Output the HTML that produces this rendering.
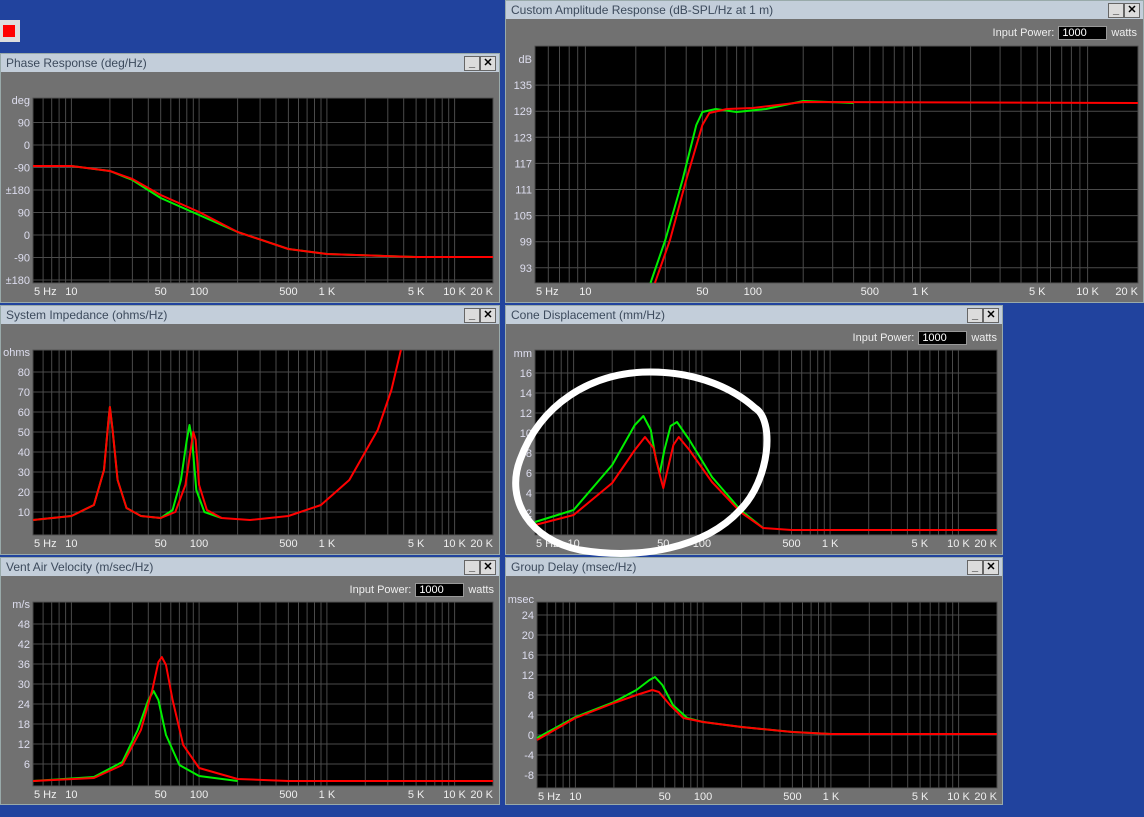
<!DOCTYPE html>
<html><head><meta charset="utf-8"><style>
body{margin:0;width:1144px;height:817px;overflow:hidden;background:#21439e;font-family:"Liberation Sans",sans-serif;position:relative}
.win{position:absolute;background:#717171;border:1px solid #9aa;box-sizing:border-box}
.tb{position:absolute;left:0;right:0;top:0;height:18px;background:#c3ceda;color:#3c4a5c;font-size:12px;line-height:18px;padding-left:5px}
.btn{position:absolute;top:2px;width:14px;height:13px;background:#dcdcdc;border:1px solid #666;font-size:11px;line-height:13px;text-align:center;color:#000;font-weight:bold}
.ip{position:absolute;font-size:11px;color:#eee;white-space:nowrap}
.ip b{display:inline-block;background:#000;color:#fff;font-weight:normal;width:44px;padding-left:3px;border:1px solid #999;margin:0 4px}
svg{position:absolute;left:0;top:0}
</style></head><body>
<div style="position:absolute;left:0;top:20px;width:20px;height:22px;background:#ddd"></div>
<div style="position:absolute;left:3px;top:25px;width:12px;height:12px;background:#f00"></div>

<div class="win" style="left:0;top:53px;width:500px;height:250px"><div class="tb">Phase Response (deg/Hz)</div><div class="btn" style="right:19px">_</div><div class="btn" style="right:3px">✕</div></div>
<div class="win" style="left:505px;top:0;width:639px;height:303px"><div class="tb">Custom Amplitude Response (dB-SPL/Hz at 1 m)</div><div class="btn" style="right:19px">_</div><div class="btn" style="right:3px">✕</div><div class="ip" style="right:6px;top:25px">Input Power:<b>1000</b>watts</div></div>
<div class="win" style="left:0;top:305px;width:500px;height:250px"><div class="tb">System Impedance (ohms/Hz)</div><div class="btn" style="right:19px">_</div><div class="btn" style="right:3px">✕</div></div>
<div class="win" style="left:505px;top:305px;width:498px;height:250px"><div class="tb">Cone Displacement (mm/Hz)</div><div class="btn" style="right:19px">_</div><div class="btn" style="right:3px">✕</div><div class="ip" style="right:5px;top:25px">Input Power:<b>1000</b>watts</div></div>
<div class="win" style="left:0;top:557px;width:500px;height:248px"><div class="tb">Vent Air Velocity (m/sec/Hz)</div><div class="btn" style="right:19px">_</div><div class="btn" style="right:3px">✕</div><div class="ip" style="right:5px;top:25px">Input Power:<b>1000</b>watts</div></div>
<div class="win" style="left:505px;top:557px;width:498px;height:248px"><div class="tb">Group Delay (msec/Hz)</div><div class="btn" style="right:19px">_</div><div class="btn" style="right:3px">✕</div></div>

<svg id="s" width="1144" height="817"></svg>
<script>
var P=[
{x0:33,x1:493,y0:98,y1:283,ys:100,st:22.5,yl:["deg","90","0","-90","±180","90","0","-90","±180"],
r:[[5,166],[10,166],[20,171],[30,179],[50,195],[100,212],[200,232],[500,249],[1000,254],[5000,257],[20000,257]],
g:[[5,166],[10,166],[20,171],[30,180],[50,198],[100,215],[200,232],[500,249],[1000,254],[5000,257],[20000,257]]},
{x0:535,x1:1138,y0:46,y1:283,ys:59,st:26.1,yl:["dB","135","129","123","117","111","105","99","93"],
r:[[26,283],[32,240],[40,180],[50,125],[55,113],[70,109],[100,108],[200,102],[20000,103]],
g:[[24.5,283],[30,240],[38,180],[46,125],[50,112],[60,109],[80,112],[120,109],[200,101],[400,103]]},
{x0:33,x1:493,y0:350,y1:535,ys:352,st:20,yl:["ohms","80","70","60","50","40","30","20","10"],
r:[[5,520],[10,516],[15,505],[18,470],[19.5,420],[20,407],[21,430],[23,480],[27,508],[35,516],[50,518],[65,512],[78,485],[87,445],[90,432],[94,440],[100,485],[115,510],[150,518],[250,520],[500,516],[900,505],[1500,480],[2500,430],[3200,390],[3800,350]],
g:[[5,520],[10,516],[15,505],[18,470],[19.5,420],[20,407],[21,430],[23,480],[27,508],[35,516],[50,518],[62,510],[72,480],[80,440],[84,425],[88,440],[95,490],[110,512],[150,518]]},
{x0:535,x1:997,y0:350,y1:535,ys:353,st:20,yl:["mm","16","14","12","10","8","6","4","2"],
r:[[5,525],[10,515],[20,483],[30,450],[36,437],[42,448],[47,475],[50,488],[54,470],[60,445],[66,437],[80,450],[120,482],[200,512],[300,528],[500,530],[20000,530]],
g:[[5,522],[10,510],[20,465],[30,425],[35,416],[40,430],[44,460],[47,473],[51,450],[57,426],[64,422],[80,440],[120,477],[200,510],[300,528]]},
{x0:33,x1:493,y0:602,y1:786,ys:604,st:20,yl:["m/s","48","42","36","30","24","18","12","6"],
r:[[5,781],[15,778],[25,765],[35,730],[43,690],[48,662],[51,657],[55,665],[62,700],[75,745],[100,768],[200,779],[500,781],[20000,781]],
g:[[5,781],[15,777],[25,762],[33,730],[40,700],[44,691],[48,700],[55,735],[70,765],[100,776],[200,781]]},
{x0:537,x1:997,y0:602,y1:788,ys:599,st:20,first:615,yl:["msec","24","20","16","12","8","4","0","-4","-8"],
r:[[5,740],[10,718],[20,703],[30,695],[40,690],[45,692],[55,705],[70,718],[100,722],[200,727],[500,732],[1000,734],[20000,734]],
g:[[5,738],[10,717],[20,702],[30,690],[38,680],[42,677],[48,685],[58,705],[75,718],[100,722],[200,727],[500,732],[1000,734],[20000,734]]}
];
var s='',F=[],L=[[5,"5 Hz"],[10,"10"],[50,"50"],[100,"100"],[500,"500"],[1000,"1 K"],[5000,"5 K"],[10000,"10 K"],[20000,"20 K"]];
[1,10,100,1000].forEach(function(m){for(var i=(m==1?5:1);i<=9;i++)F.push(i*m)});F.push(10000,20000);
P.forEach(function(p){
 var X=function(f){return p.x0+(p.x1-p.x0)*Math.log(f/5)/Math.log(4000)};
 s+='<rect x="'+p.x0+'" y="'+p.y0+'" width="'+(p.x1-p.x0)+'" height="'+(p.y1-p.y0)+'" fill="#000" stroke="#555"/>';
 F.forEach(function(f){var x=X(f).toFixed(1);s+='<line x1="'+x+'" x2="'+x+'" y1="'+p.y0+'" y2="'+p.y1+'" stroke="#4a4a4a"/>'});
 p.yl.forEach(function(t,i){
  var y=i==0?p.ys:(p.first?p.first+(i-1)*p.st:p.ys+i*p.st);
  if(i>0)s+='<line x1="'+p.x0+'" x2="'+p.x1+'" y1="'+y.toFixed(1)+'" y2="'+y.toFixed(1)+'" stroke="#4a4a4a"/>';
  s+='<text x="'+(p.x0-3)+'" y="'+(y+4).toFixed(1)+'" fill="#dde" font-size="11" text-anchor="end">'+t+'</text>'});
 L.forEach(function(l,i){var x=X(l[0]);s+='<text x="'+(i==0?p.x0+1:x).toFixed(1)+'" y="'+(p.y1+12)+'" fill="#eee" font-size="11" text-anchor="'+(i==0?'start':(i==8?'end':'middle'))+'">'+l[1]+'</text>'});
 var pl=function(a,c){return '<polyline fill="none" stroke="'+c+'" stroke-width="2" stroke-linejoin="round" points="'+a.map(function(q){return X(q[0]).toFixed(1)+','+q[1]}).join(' ')+'"/>'};
 s+=pl(p.g,'#00ee00')+pl(p.r,'#ff0000');
});
s+='<path d="M755,408 C775,420 770,480 740,510 C705,548 640,560 580,550 C530,540 505,500 520,460 C540,405 590,372 650,372 C700,372 735,390 755,408" fill="none" stroke="#fff" stroke-width="7" stroke-linecap="round"/>';
document.getElementById('s').innerHTML=s;
</script>
</body></html>
